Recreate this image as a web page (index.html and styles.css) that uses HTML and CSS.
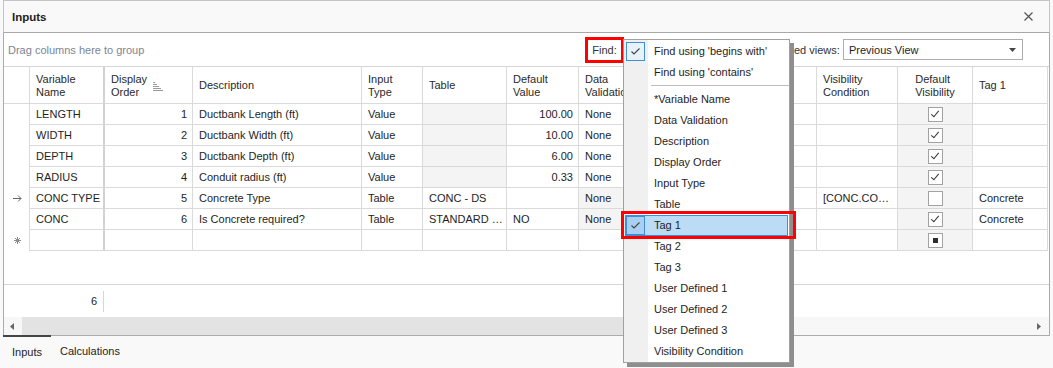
FILE: index.html
```html
<!DOCTYPE html>
<html>
<head>
    <link rel="stylesheet" href="styles.css">
</head>
<body>
    <div class="titlebar">
        <span class="title">Inputs</span>
        <svg class="close" width="9" height="9" viewBox="0 0 9 9"><path d="M0.5 0.5 L8.5 8.5 M8.5 0.5 L0.5 8.5" stroke="#555" stroke-width="1.2"/></svg>
    </div>

    <div class="panel">
        <div class="group-bar">
            <span class="drag-hint">Drag columns here to group</span>
            <span class="find-label">Find:</span>
            <span class="find-input"></span>
            <span class="views-label">Saved views:</span>
            <div class="combo">
                <span>Previous View</span>
                <svg width="7" height="4" viewBox="0 0 7 4"><path d="M0 0 H7 L3.5 4 Z" fill="#444"/></svg>
            </div>
        </div>

        <div class="grid">
            <div class="row head">
                <div class="cell c-ind"></div>
                <div class="cell c-name">Variable<br>Name</div>
                <div class="cell c-order">Display<br>Order
                    <svg class="sort" width="11" height="9" viewBox="0 0 11 9"><path d="M1 0.5 H3 M1 2.5 H5 M1 4.5 H7 M1 6.5 H9 M1 8.5 H11" stroke="#9a9a9a" stroke-width="1"/></svg>
                </div>
                <div class="cell c-desc">Description</div>
                <div class="cell c-type">Input<br>Type</div>
                <div class="cell c-table">Table</div>
                <div class="cell c-def">Default<br>Value</div>
                <div class="cell c-valid">Data<br>Validation</div>
                <div class="cell c-hidden"></div>
                <div class="cell c-vcond">Visibility<br>Condition</div>
                <div class="cell c-vis">Default<br>Visibility</div>
                <div class="cell c-tag">Tag 1</div>
            </div>

            <div class="row">
                <div class="cell c-ind"></div>
                <div class="cell c-name">LENGTH</div>
                <div class="cell c-order num">1</div>
                <div class="cell c-desc">Ductbank Length (ft)</div>
                <div class="cell c-type">Value</div>
                <div class="cell c-table ro"></div>
                <div class="cell c-def num">100.00</div>
                <div class="cell c-valid">None</div>
                <div class="cell c-hidden"></div>
                <div class="cell c-vcond"></div>
                <div class="cell c-vis ro"><span class="check on"></span></div>
                <div class="cell c-tag"></div>
            </div>
            <div class="row">
                <div class="cell c-ind"></div>
                <div class="cell c-name">WIDTH</div>
                <div class="cell c-order num">2</div>
                <div class="cell c-desc">Ductbank Width (ft)</div>
                <div class="cell c-type">Value</div>
                <div class="cell c-table ro"></div>
                <div class="cell c-def num">10.00</div>
                <div class="cell c-valid">None</div>
                <div class="cell c-hidden"></div>
                <div class="cell c-vcond"></div>
                <div class="cell c-vis ro"><span class="check on"></span></div>
                <div class="cell c-tag"></div>
            </div>
            <div class="row">
                <div class="cell c-ind"></div>
                <div class="cell c-name">DEPTH</div>
                <div class="cell c-order num">3</div>
                <div class="cell c-desc">Ductbank Depth (ft)</div>
                <div class="cell c-type">Value</div>
                <div class="cell c-table ro"></div>
                <div class="cell c-def num">6.00</div>
                <div class="cell c-valid">None</div>
                <div class="cell c-hidden"></div>
                <div class="cell c-vcond"></div>
                <div class="cell c-vis ro"><span class="check on"></span></div>
                <div class="cell c-tag"></div>
            </div>
            <div class="row">
                <div class="cell c-ind"></div>
                <div class="cell c-name">RADIUS</div>
                <div class="cell c-order num">4</div>
                <div class="cell c-desc">Conduit radius (ft)</div>
                <div class="cell c-type">Value</div>
                <div class="cell c-table ro"></div>
                <div class="cell c-def num">0.33</div>
                <div class="cell c-valid">None</div>
                <div class="cell c-hidden"></div>
                <div class="cell c-vcond"></div>
                <div class="cell c-vis ro"><span class="check on"></span></div>
                <div class="cell c-tag"></div>
            </div>
            <div class="row">
                <div class="cell c-ind">
                    <svg width="9" height="7" viewBox="0 0 9 7"><path d="M0 3.5 H8 M5 0.5 L8 3.5 L5 6.5" stroke="#666" stroke-width="1" fill="none"/></svg>
                </div>
                <div class="cell c-name">CONC TYPE</div>
                <div class="cell c-order num">5</div>
                <div class="cell c-desc">Concrete Type</div>
                <div class="cell c-type">Table</div>
                <div class="cell c-table">CONC - DS</div>
                <div class="cell c-def"></div>
                <div class="cell c-valid ro">None</div>
                <div class="cell c-hidden"></div>
                <div class="cell c-vcond">[CONC.CO…</div>
                <div class="cell c-vis ro"><span class="check"></span></div>
                <div class="cell c-tag">Concrete</div>
            </div>
            <div class="row">
                <div class="cell c-ind"></div>
                <div class="cell c-name">CONC</div>
                <div class="cell c-order num">6</div>
                <div class="cell c-desc">Is Concrete required?</div>
                <div class="cell c-type">Table</div>
                <div class="cell c-table">STANDARD …</div>
                <div class="cell c-def">NO</div>
                <div class="cell c-valid ro">None</div>
                <div class="cell c-hidden"></div>
                <div class="cell c-vcond"></div>
                <div class="cell c-vis ro"><span class="check on"></span></div>
                <div class="cell c-tag">Concrete</div>
            </div>
            <div class="row">
                <div class="cell c-ind">
                    <svg width="7" height="7" viewBox="0 0 7 7"><path d="M3.5 0 V7 M0 3.5 H7 M1 1 L6 6 M6 1 L1 6" stroke="#8a8a8a" stroke-width="1"/></svg>
                </div>
                <div class="cell c-name"></div>
                <div class="cell c-order"></div>
                <div class="cell c-desc"></div>
                <div class="cell c-type"></div>
                <div class="cell c-table"></div>
                <div class="cell c-def"></div>
                <div class="cell c-valid"></div>
                <div class="cell c-hidden"></div>
                <div class="cell c-vcond"></div>
                <div class="cell c-vis ro"><span class="check mixed"></span></div>
                <div class="cell c-tag"></div>
            </div>
        </div>

        <div class="footer">
            <div class="count">6</div>
        </div>

        <div class="hscroll">
            <svg class="arrow" width="4" height="7" viewBox="0 0 4 7"><path d="M4 0 V7 L0 3.5 Z" fill="#666"/></svg>
            <div class="thumb"></div>
            <svg class="arrow right" width="4" height="7" viewBox="0 0 4 7"><path d="M0 0 V7 L4 3.5 Z" fill="#666"/></svg>
        </div>
    </div>

    <div class="tabs">
        <span class="tab active">Inputs</span>
        <span class="tab">Calculations</span>
    </div>

    <!-- find options menu, opened from the Find: button -->
    <div class="menu">
        <div class="item checked"><span class="ico"><svg width="9" height="7" viewBox="0 0 9 7"><path d="M0.5 3.5 L3 6 L8.5 0.5" stroke="#444" stroke-width="1.1" fill="none"/></svg></span>Find using 'begins with'</div>
        <div class="item">Find using 'contains'</div>
        <div class="sep"></div>
        <div class="item">*Variable Name</div>
        <div class="item">Data Validation</div>
        <div class="item">Description</div>
        <div class="item">Display Order</div>
        <div class="item">Input Type</div>
        <div class="item">Table</div>
        <div class="item checked hot"><span class="ico"><svg width="9" height="7" viewBox="0 0 9 7"><path d="M0.5 3.5 L3 6 L8.5 0.5" stroke="#444" stroke-width="1.1" fill="none"/></svg></span>Tag 1</div>
        <div class="item">Tag 2</div>
        <div class="item">Tag 3</div>
        <div class="item">User Defined 1</div>
        <div class="item">User Defined 2</div>
        <div class="item">User Defined 3</div>
        <div class="item">Visibility Condition</div>
    </div>
    <div class="mark-tag"></div>
</body>
</html>
```

FILE: styles.css
```css
body {
    margin: 0;
    padding-left: 3px;
    background-color: #f9f9f9;
    font-family: "Liberation Sans", Arial, sans-serif;
    font-size: 11px;
    color: #1e1e1e;
    width: 1047px;
    height: 368px;
    overflow: hidden;
    position: relative;
}

/* title bar */
.titlebar {
    height: 31px;
    border: 1px solid #c4c4c4;
    border-bottom-color: #a8a8a8;
    background-color: #f9f9f9;
    display: flex;
    align-items: center;
    justify-content: space-between;
    padding: 0 16px 0 8px;
}

.title {
    font-weight: bold;
    font-size: 11.5px;
}

/* main panel */
.panel {
    height: 302px;
    border: 1px solid #ababab;
    border-top: none;
    background-color: white;
    display: flex;
    flex-direction: column;
}

.group-bar {
    height: 33px;
    flex: none;
    border-bottom: 1px solid #d6d6d6;
    display: flex;
    align-items: center;
    padding: 0 26px 0 4px;
}

.drag-hint {
    color: #7b8594;
    margin-right: auto;
}

.find-label {
    width: 33px;
    height: 20px;
    line-height: 20px;
    border: 3px solid #ff0000;
    text-align: center;
    color: #333;
}

.find-input {
    width: 141px;
    margin: 0 5px;
}

.views-label {
    width: 62px;
    text-align: right;
    white-space: nowrap;
    margin-right: 6px;
    color: #333;
}

.combo {
    width: 180px;
    height: 21px;
    border: 1px solid #adadad;
    display: flex;
    align-items: center;
    justify-content: space-between;
    padding: 0 6px 0 5px;
    box-sizing: border-box;
}

/* grid */
.grid {
    flex: 1;
}

.row {
    display: flex;
    height: 21px;
}

.row.head {
    height: 37px;
}

.cell {
    box-sizing: border-box;
    border-right: 1px solid #dadada;
    border-bottom: 1px solid #dadada;
    padding: 0 6px;
    display: flex;
    align-items: center;
    white-space: nowrap;
    overflow: hidden;
    flex: none;
}

.head .cell {
    line-height: 13px;
    padding-top: 1px;
    color: #2a2a2a;
}

.row:not(.head) .c-ind {
    border-bottom: none;
    justify-content: center;
    padding: 0 0 0 1px;
}

.num {
    justify-content: flex-end;
    padding-right: 5px;
}

.ro {
    background-color: #f4f4f4;
}

.c-ind { width: 26px; }
.c-name { width: 75px; border-right: 2px solid #d2d2d2; }
.c-order { width: 88px; }
.c-desc { width: 169px; }
.c-type { width: 61px; }
.c-table { width: 84px; }
.c-def { width: 72px; }
.c-valid { width: 102px; }
.c-hidden { width: 136px; }
.c-vcond { width: 81px; }
.c-vis { width: 75px; justify-content: center; }
.c-tag { width: 75px; }

.c-order .sort {
    margin-left: 5px;
    margin-top: 1px;
}

.check {
    width: 13px;
    height: 13px;
    border: 1px solid #a2a2a2;
    background: white;
    position: relative;
}

.check.on::after {
    content: "";
    position: absolute;
    left: 4px;
    top: 1px;
    width: 3px;
    height: 7px;
    border: solid #333;
    border-width: 0 1px 1px 0;
    transform: rotate(40deg);
}

.check.mixed::after {
    content: "";
    position: absolute;
    left: 4px;
    top: 4px;
    width: 5px;
    height: 5px;
    background: #2d2d2d;
}

/* summary footer */
.footer {
    height: 32px;
    flex: none;
    border-top: 1px solid #d4d4d4;
    display: flex;
    align-items: center;
}

.count {
    width: 93px;
    height: 21px;
    line-height: 21px;
    text-align: right;
    padding-right: 6px;
    border-right: 1px solid #d6d6d6;
}

.hscroll {
    height: 18px;
    flex: none;
    background-color: #f7f7f7;
    display: flex;
    align-items: center;
}

.hscroll .arrow {
    margin: 0 8px 0 6px;
}

.hscroll .arrow.right {
    margin: 0 8px 0 auto;
}

.thumb {
    width: 680px;
    height: 18px;
    background-color: #e3e3e3;
}

/* tabs */
.tabs {
    display: flex;
    height: 31px;
}

.tab {
    padding: 9px 9px 0 9px;
    color: #1e1e1e;
}

.tab.active {
    border-top: 2px solid #444;
    margin-top: -1px;
}

/* dropdown menu */
.menu {
    position: absolute;
    left: 623px;
    top: 39px;
    width: 165px;
    height: 321px;
    padding-top: 1px;
    border: 1px solid #a0a0a0;
    background: linear-gradient(to right, #f0f0f0 24px, white 24px);
    box-shadow: 4px 4px 0 #8e8e8e;
}

.item {
    height: 21px;
    line-height: 21px;
    padding-left: 30px;
    position: relative;
    color: #1e1e1e;
}

.item .ico {
    position: absolute;
    left: 2px;
    top: 1px;
    width: 17px;
    height: 17px;
    border: 1px solid #3c8fd8;
    display: flex;
    align-items: center;
    justify-content: center;
    background: #e8f2fb;
}

.item.hot {
    background-color: #bcdcf5;
    margin: 0 1px;
    padding-left: 29px;
    outline: 1px solid #3a8ee0;
    outline-offset: -1px;
}

.item.hot .ico {
    left: 1px;
    background: #a9d0f0;
}

.sep {
    height: 6px;
    margin-left: 27px;
    background: linear-gradient(#bbb, #bbb) no-repeat 0 2px / 100% 1px;
}

.mark-tag {
    position: absolute;
    left: 621px;
    top: 211px;
    width: 169px;
    height: 22px;
    border: 3px solid #ff0000;
}
```
